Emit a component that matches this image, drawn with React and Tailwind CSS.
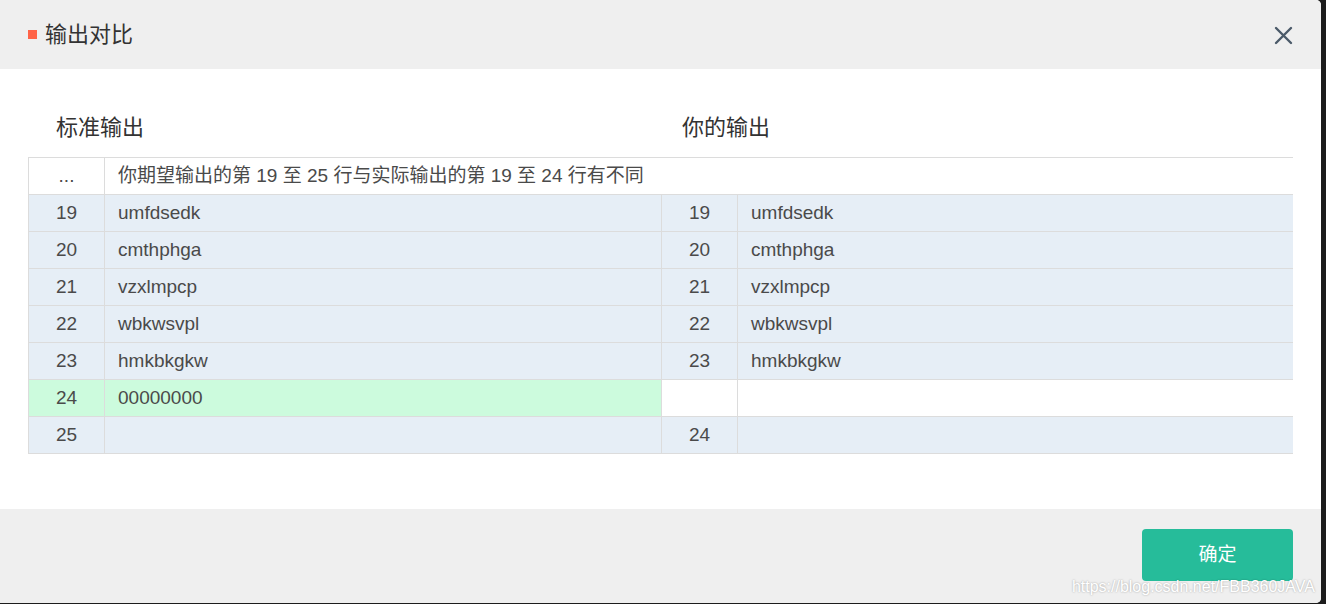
import React from "react";

const font = { fontFamily: '"Liberation Sans", Arial, "Noto Sans CJK SC", sans-serif' };

const rows = [
  { l: "19", lt: "umfdsedk", r: "19", rt: "umfdsedk", type: "same" },
  { l: "20", lt: "cmthphga", r: "20", rt: "cmthphga", type: "same" },
  { l: "21", lt: "vzxlmpcp", r: "21", rt: "vzxlmpcp", type: "same" },
  { l: "22", lt: "wbkwsvpl", r: "22", rt: "wbkwsvpl", type: "same" },
  { l: "23", lt: "hmkbkgkw", r: "23", rt: "hmkbkgkw", type: "same" },
  { l: "24", lt: "00000000", r: "", rt: "", type: "diff" },
  { l: "25", lt: "", r: "24", rt: "", type: "same" },
];

function Row({ row }) {
  const leftBg = row.type === "diff" ? "bg-[#ccfbdd]" : "bg-[#e6eef6]";
  const rightBg = row.type === "diff" ? "bg-white" : "bg-[#e6eef6]";
  return (
    <div className="flex h-[37px] border-b border-[#dcdcdc]">
      <div className={`w-[76px] shrink-0 border-r border-[#dcdcdc] flex items-center justify-center ${leftBg}`}>{row.l}</div>
      <div className={`w-[557px] shrink-0 border-r border-[#dcdcdc] flex items-center pl-[13px] ${leftBg}`}>{row.lt}</div>
      <div className={`w-[76px] shrink-0 border-r border-[#dcdcdc] flex items-center justify-center ${rightBg}`}>{row.r}</div>
      <div className={`flex-1 flex items-center pl-[13px] ${rightBg}`}>{row.rt}</div>
    </div>
  );
}

export default function App() {
  return (
    <div className="w-[1326px] h-[604px] bg-[#1c1c1c] flex items-start" style={font}>
      <div className="relative w-[1321px] h-[603px] bg-white rounded-r-[5px] overflow-hidden flex flex-col">
        <div className="h-[69px] bg-[#efefef] flex items-center pl-[28px] pr-[28px] shrink-0">
          <div className="w-[9px] h-[9px] bg-[#ff6347] mr-[8px]" />
          <div className="text-[22px] text-[#333] leading-none">输出对比</div>
          <div className="flex-1" />
          <svg width="19" height="19" viewBox="0 0 19 19" className="mt-[1px]">
            <path d="M2 2 L17 17 M17 2 L2 17" stroke="#4b5a69" strokeWidth="2.4" strokeLinecap="round" />
          </svg>
        </div>
        <div className="flex-1 pt-[45px]">
          <div className="flex pl-[56px] h-[26px] items-center text-[22px] text-[#333]">
            <div className="w-[626px]">标准输出</div>
            <div>你的输出</div>
          </div>
          <div className="ml-[28px] mt-[17px] w-[1265px] border-t border-l border-[#dcdcdc] text-[19px] text-[#4a4a4a]">
            <div className="flex h-[37px] border-b border-[#dcdcdc] bg-white">
              <div className="w-[76px] shrink-0 border-r border-[#dcdcdc] flex items-center justify-center">...</div>
              <div className="flex-1 flex items-center pl-[13px]">你期望输出的第 19 至 25 行与实际输出的第 19 至 24 行有不同</div>
            </div>
            {rows.map((r, i) => (
              <Row key={i} row={r} />
            ))}
          </div>
        </div>
        <div className="h-[94px] bg-[#efefef] shrink-0 flex justify-end items-start pt-[20px] pr-[28px]">
          <button className="w-[151px] h-[52px] bg-[#26bc9a] rounded-[4px] text-white text-[19px] flex items-center justify-center">确定</button>
        </div>
        <div className="absolute right-[6px] bottom-[8px] text-[16px] text-white leading-none" style={{ textShadow: "0 0 2px rgba(0,0,0,0.35)" }}>
          https://blog.csdn.net/FBB360JAVA
        </div>
      </div>
    </div>
  );
}
